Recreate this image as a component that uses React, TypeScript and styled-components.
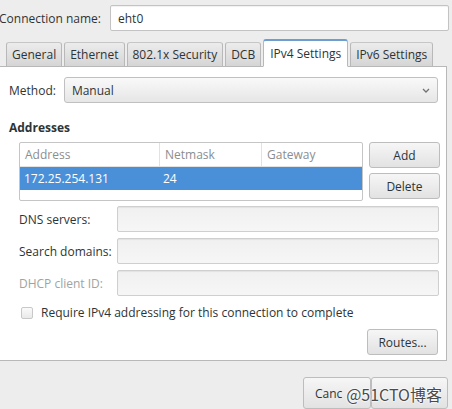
import React from "react";
import styled, { createGlobalStyle } from "styled-components";

const Global = createGlobalStyle`
  html, body { margin: 0; padding: 0; background: #ededed; }
  body { font-family: "Open Sans", "DejaVu Sans", sans-serif; font-size: 12px; color: #2e3436; }
`;

const Window = styled.div`
  width: 452px;
  height: 409px;
  overflow: hidden;
  position: relative;
  background: #ededed;
  display: flex;
  flex-direction: column;
`;

const TopRow = styled.div`
  display: flex;
  align-items: center;
  padding: 5px 3px 0 0;
  margin-left: -1px;
  gap: 9px;
`;

const Label = styled.span<{ $dim?: boolean }>`
  color: ${(p) => (p.$dim ? "#a0a3a0" : "#2e3436")};
  white-space: nowrap;
`;

const Entry = styled.div<{ $disabled?: boolean }>`
  flex: 1;
  height: 26px;
  box-sizing: border-box;
  border: 1px solid #c3c3c3;
  border-radius: 2px;
  background: ${(p) => (p.$disabled ? "#f1f1f1" : "#ffffff")};
  box-shadow: inset 0 1px 1px rgba(0,0,0,0.06);
  display: flex;
  align-items: center;
  padding-left: 7px;
`;

const GrayEntry = styled(Entry)`
  background: linear-gradient(#f0f0f0, #f6f6f6);
  border-color: #cfcfcf;
`;

const Tabs = styled.div`
  display: flex;
  align-items: flex-end;
  gap: 2px;
  padding-left: 6px;
  margin-top: 8px;
  height: 28px;
  position: relative;
  z-index: 1;
  margin-bottom: -1px;
`;

const Tab = styled.div<{ $active?: boolean }>`
  height: ${(p) => (p.$active ? 28 : 25)}px;
  box-sizing: border-box;
  padding: 0 ${(p) => (p.$active ? 6 : 5)}px;
  display: flex;
  align-items: center;
  border: 1px solid #b8b8b8;
  border-bottom: ${(p) => (p.$active ? "1px solid #ffffff" : "1px solid #b8b8b8")};
  border-top: ${(p) => (p.$active ? "2px solid #6d9ecf" : "1px solid #c6c6c6")};
  border-radius: 3px 3px 0 0;
  background: ${(p) =>
    p.$active ? "#ffffff" : "linear-gradient(#ececec, #d5d5d5)"};
  color: #2e3436;
  white-space: nowrap;
`;

const Panel = styled.div`
  margin-left: -1px;
  width: 448px;
  height: 299px;
  box-sizing: border-box;
  background: #ffffff;
  border: 1px solid #b8b8b8;
  display: flex;
  flex-direction: column;
  padding: 10px 8px 0 9px;
`;

const MethodRow = styled.div`
  display: flex;
  align-items: center;
  gap: 8px;
`;

const Combo = styled.div`
  flex: 1;
  height: 26px;
  box-sizing: border-box;
  border: 1px solid #c0c0c0;
  border-radius: 3px;
  background: linear-gradient(#f9f9f9, #e6e6e6);
  display: flex;
  align-items: center;
  justify-content: space-between;
  padding: 0 6px 0 7px;
`;

const Heading = styled.div`
  font-weight: bold;
  margin-top: 17px;
  height: 16px;
  line-height: 16px;
`;

const Section = styled.div`
  padding-left: 10px;
  display: flex;
  flex-direction: column;
`;

const AddrRow = styled.div`
  display: flex;
  gap: 6px;
  margin-top: 6px;
`;

const Table = styled.div`
  width: 344px;
  flex: none;
  height: 59px;
  box-sizing: border-box;
  border: 1px solid #c5c5c5;
  border-radius: 2px;
  background: #fff;
  display: flex;
  flex-direction: column;
  overflow: hidden;
`;

const TRow = styled.div<{ $head?: boolean; $selected?: boolean }>`
  display: grid;
  grid-template-columns: 139px 102px 1fr;
  height: 23px;
  align-items: center;
  background: ${(p) => (p.$selected ? "#4a90d9" : "transparent")};
  color: ${(p) => (p.$head ? "#8b8e8f" : p.$selected ? "#ffffff" : "#2e3436")};
  ${(p) => (p.$head ? "border-bottom: 1px solid #e2e2e2;" : "")}
`;

const Cell = styled.div<{ $sep?: boolean; $head?: boolean }>`
  padding-left: ${(p) => (p.$head ? 5 : 4)}px;
  height: 100%;
  display: flex;
  align-items: center;
  box-sizing: border-box;
  ${(p) => (p.$sep ? "border-left: 1px solid #e2e2e2;" : "")}
  white-space: nowrap;
`;

const ButtonCol = styled.div`
  display: flex;
  flex-direction: column;
  gap: 5px;
`;

const Button = styled.div<{ $w?: number; $align?: string }>`
  width: ${(p) => p.$w ?? 71}px;
  height: 26px;
  box-sizing: border-box;
  border: 1px solid #bdbdbd;
  border-radius: 3px;
  background: linear-gradient(#f6f6f6, #e2e2e2);
  display: flex;
  align-items: center;
  justify-content: ${(p) => p.$align ?? "center"};
  color: #2e3436;
`;

const FieldGrid = styled.div`
  display: grid;
  grid-template-columns: 98px 322px;
  row-gap: 6px;
  margin-top: 5px;
  align-items: center;
`;

const CheckRow = styled.div`
  display: flex;
  align-items: center;
  gap: 8px;
  margin-top: 8px;
  padding-left: 2px;
`;

const Check = styled.div`
  width: 10px;
  height: 10px;
  border: 1px solid #c8c8c8;
  border-radius: 2px;
  background: linear-gradient(#fafafa, #e9e9e9);
`;

const RoutesRow = styled.div`
  display: flex;
  justify-content: flex-end;
  margin-top: 8px;
`;

const Footer = styled.div`
  display: flex;
  justify-content: flex-end;
  padding: 16px 4px 0 0;
  position: relative;
`;

const FooterButton = styled(Button)`
  height: 32px;
  padding-left: 11px;
`;

const Watermark = styled.div`
  position: absolute;
  right: 10px;
  top: 21px;
  font-family: "Noto Sans CJK SC", "DejaVu Sans", sans-serif;
  font-size: 16px;
  color: #4a4a4a;
  text-shadow: 0 0 2px #fff, 0 0 2px #fff, 0 0 2px #fff;
  letter-spacing: 0px;
`;

const Chevron = () => (
  <svg width="10" height="8" viewBox="0 0 10 8">
    <path d="M2 3 L5 6 L8 3" stroke="#6f7373" strokeWidth="1.3" fill="none" />
  </svg>
);

export default function App() {
  return (
    <Window>
      <Global />
      <TopRow>
        <Label>Connection name:</Label>
        <Entry>eht0</Entry>
      </TopRow>
      <Tabs>
        <Tab>General</Tab>
        <Tab>Ethernet</Tab>
        <Tab>802.1x Security</Tab>
        <Tab>DCB</Tab>
        <Tab $active>IPv4 Settings</Tab>
        <Tab>IPv6 Settings</Tab>
      </Tabs>
      <Panel>
        <MethodRow>
          <Label>Method:</Label>
          <Combo>
            <span>Manual</span>
            <Chevron />
          </Combo>
        </MethodRow>
        <Heading>Addresses</Heading>
        <Section>
          <AddrRow>
            <Table>
              <TRow $head>
                <Cell $head>Address</Cell>
                <Cell $head $sep>Netmask</Cell>
                <Cell $head $sep>Gateway</Cell>
              </TRow>
              <TRow $selected>
                <Cell>172.25.254.131</Cell>
                <Cell>24</Cell>
                <Cell></Cell>
              </TRow>
            </Table>
            <ButtonCol>
              <Button>Add</Button>
              <Button>Delete</Button>
            </ButtonCol>
          </AddrRow>
          <FieldGrid>
            <Label>DNS servers:</Label>
            <GrayEntry />
            <Label>Search domains:</Label>
            <GrayEntry />
            <Label $dim>DHCP client ID:</Label>
            <GrayEntry $disabled />
          </FieldGrid>
          <CheckRow>
            <Check />
            <Label>Require IPv4 addressing for this connection to complete</Label>
          </CheckRow>
          <RoutesRow>
            <Button $w={71}>Routes...</Button>
          </RoutesRow>
        </Section>
      </Panel>
      <Footer>
        <FooterButton $w={68} $align="flex-start">Canc</FooterButton>
        <FooterButton $w={77} />
        <Watermark>@51CTO博客</Watermark>
      </Footer>
    </Window>
  );
}
